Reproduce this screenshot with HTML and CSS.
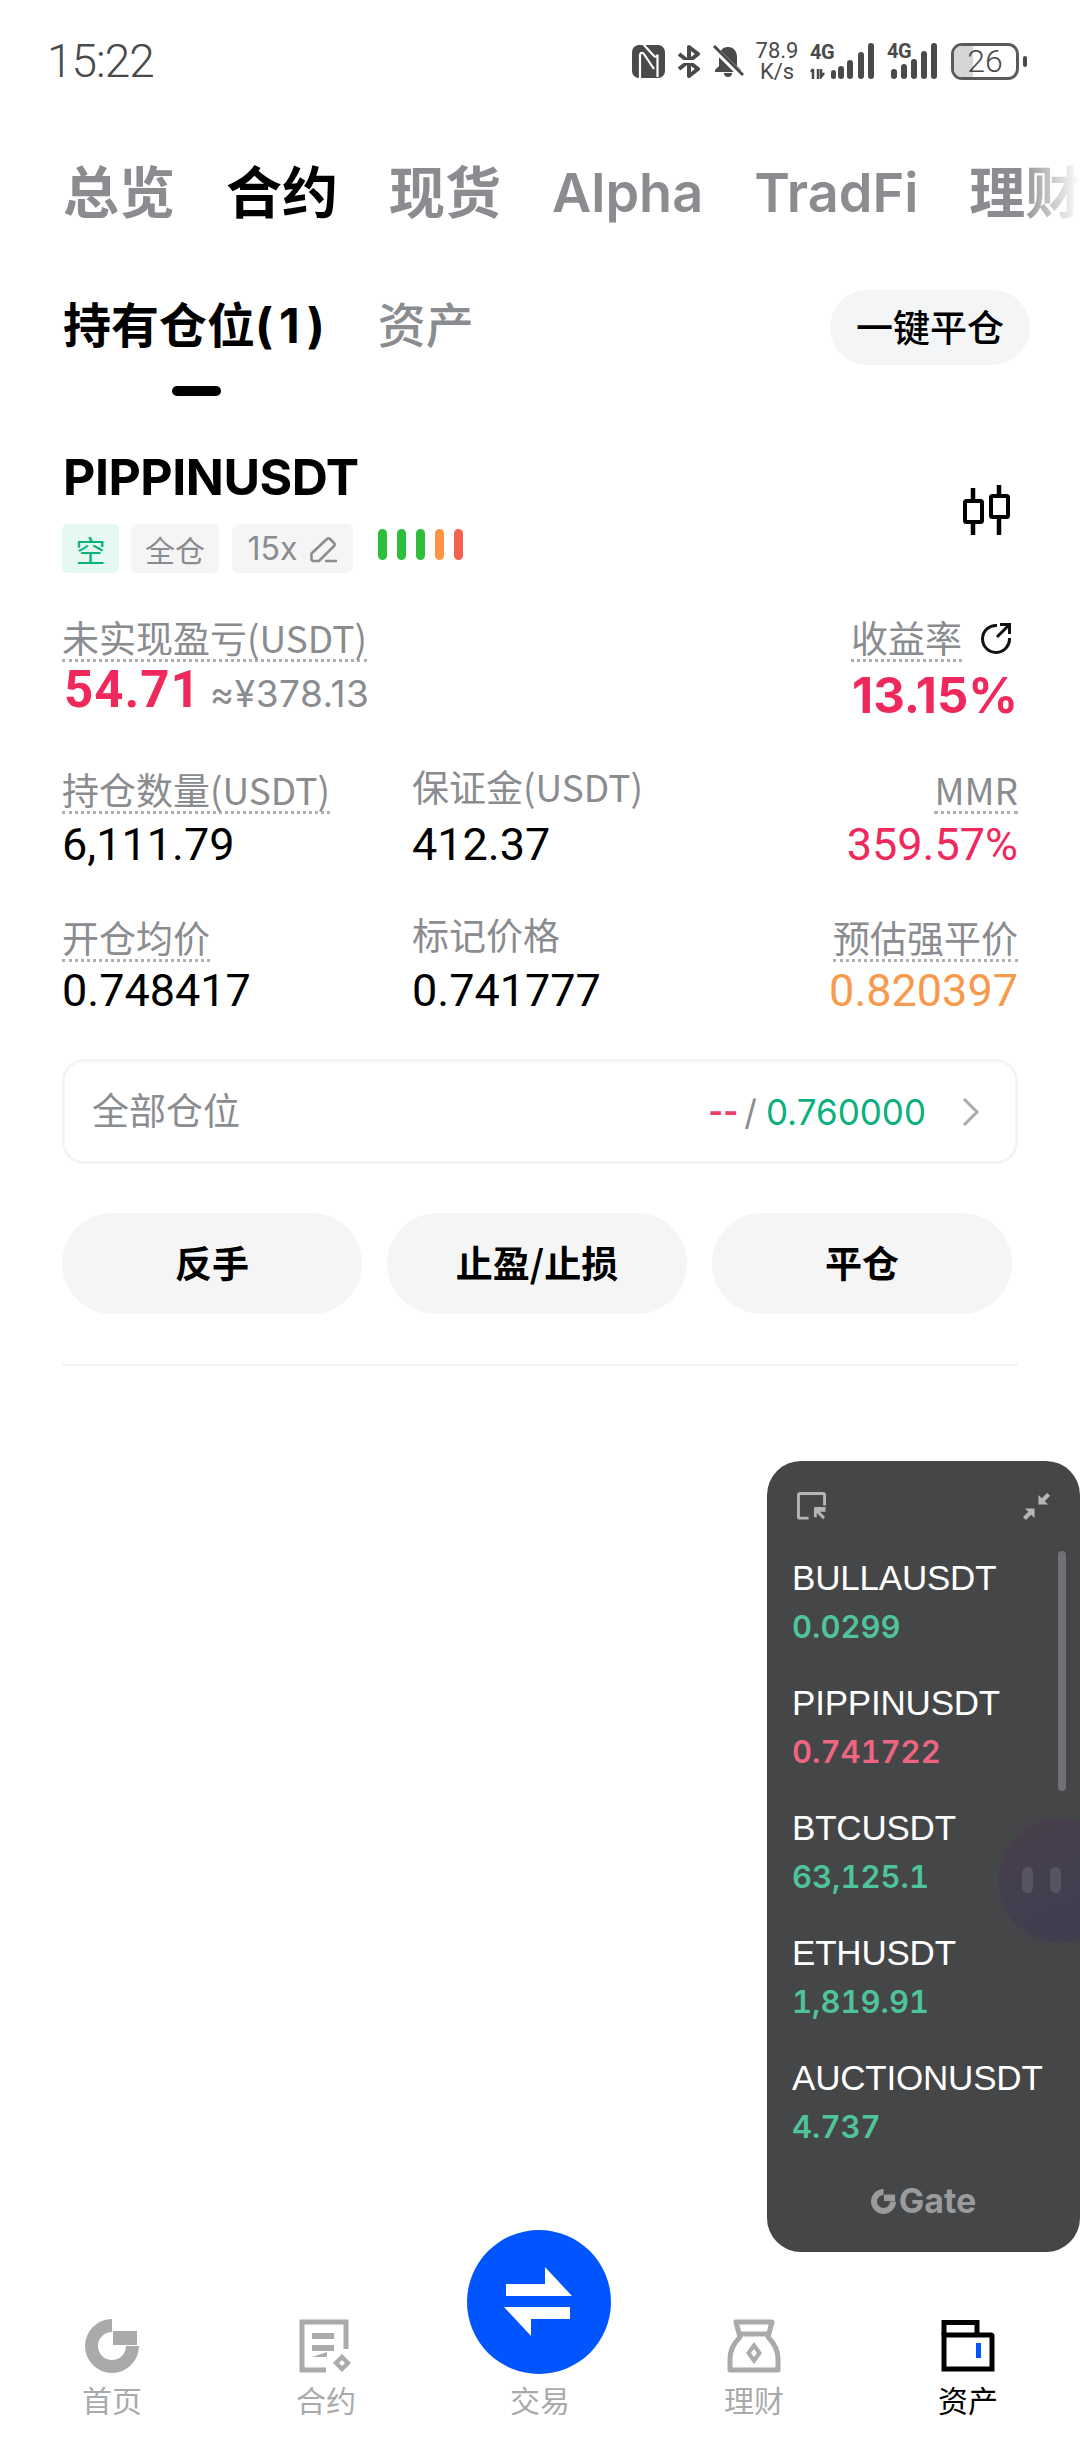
FILE: index.html
```html
<!DOCTYPE html>
<html lang="zh">
<head>
<meta charset="utf-8">
<title>持有仓位</title>
<link rel="stylesheet" href="styles.css">
</head>
<body>
<div class="page">
  <header class="status">
    <span class="clock">15:22</span>
    <div class="sysicons">
      <svg class="ic-nfc" viewBox="0 0 33 33"><rect width="33" height="33" rx="7" fill="#4a4a4a"/><path d="M8 33V10c0-2 2-3 3.500-1.500L22 24" fill="none" stroke="#fff" stroke-width="2.200"/><path d="M11 0l11 12c1.500 1.500 3.500.5 3.500-1.500V33" fill="none" stroke="#fff" stroke-width="2.200" transform="translate(0 -1)"/></svg>
      <svg class="ic-bt" viewBox="0 0 23 33"><path d="M2 9l19 15-9 7V2l9 7L2 24" fill="none" stroke="#4a4a4a" stroke-width="4" stroke-linejoin="round"/><path d="M0 16.500h23" stroke="#fff" stroke-width="3"/></svg>
      <svg class="ic-bell" viewBox="0 0 32 32"><path d="M16 2c6 0 9 5 9 10v9l4 4v2H3v-2l4-4v-9c0-5 3-10 9-10zM12 28h8c0 3-2 4-4 4s-4-1-4-4z" fill="#4a4a4a"/><path d="M2 3l28 28" stroke="#fff" stroke-width="6"/><path d="M2 1l29 29" stroke="#4a4a4a" stroke-width="3"/></svg>
      <div class="speed"><span>78.9</span><span>K/s</span></div>
      <div class="sim sim-one">
        <span class="g4">4G</span>
        <svg class="ic-sig1" viewBox="0 0 64 36"><path d="M3 36V26M8 36V26M3 26l-2 3" fill="none" stroke="#4a4a4a" stroke-width="2.500"/><path d="M11 26v8l3-4" fill="none" stroke="#4a4a4a" stroke-width="2.500"/><rect x="21" y="27" width="5" height="9" rx="2.500" fill="#4a4a4a"/><rect x="28" y="23" width="6" height="13" rx="3" fill="#4a4a4a"/><rect x="37" y="17" width="6" height="19" rx="3" fill="#4a4a4a"/><rect x="48" y="9" width="6" height="27" rx="3" fill="#4a4a4a"/><rect x="58" y="0" width="6" height="36" rx="3" fill="#4a4a4a"/></svg>
      </div>
      <div class="sim sim-two">
        <span class="g4">4G</span>
        <svg class="ic-sig2" viewBox="0 0 46 36"><rect x="0" y="26" width="6" height="10" rx="3" fill="#4a4a4a"/><rect x="10" y="21" width="6" height="15" rx="3" fill="#4a4a4a"/><rect x="20" y="16" width="6" height="20" rx="3" fill="#4a4a4a"/><rect x="30" y="8" width="6" height="28" rx="3" fill="#4a4a4a"/><rect x="40" y="0" width="6" height="36" rx="3" fill="#4a4a4a"/></svg>
      </div>
      <div class="battery"><div class="batt-body"><span class="batt-fill"></span><span class="batt-num">26</span></div><span class="batt-nub"></span></div>
    </div>
  </header>

  <nav class="tabs">
    <span class="cjk">总览</span><span class="cjk on">合约</span><span class="cjk">现货</span><span class="lat">Alpha</span><span class="lat">TradFi</span><span class="cjk">理财</span>
  </nav>

  <section class="subtabs">
    <div class="subtab on"><span class="subtab-text">持有仓位<span class="count">(1)</span></span><i class="subtab-bar"></i></div>
    <div class="subtab"><span class="subtab-text">资产</span></div>
    <button class="closeall">一键平仓</button>
  </section>

  <main class="card">
    <div class="card-head">
      <div>
        <h1 class="symbol">PIPPINUSDT</h1>
        <div class="badges">
          <span class="badge short">空</span>
          <span class="badge cross">全仓</span>
          <span class="badge lev">15x
            <svg class="ic-edit" viewBox="0 0 28 28"><path d="M4 26h6L25 11a2 2 0 0 0 0-3l-4-4a2 2 0 0 0-3 0L3 18a2 2 0 0 0-.500 1.500V24a2 2 0 0 0 1.500 2zM16 26h12" fill="none" stroke="#8a8c8f" stroke-width="2.600"/></svg>
          </span>
          <div class="risk"><i class="g"></i><i class="g"></i><i class="g"></i><i class="o"></i><i class="r"></i></div>
        </div>
      </div>
      <svg class="ic-candle" viewBox="0 0 48 52"><path d="M10 3v13M10 37v13M36 0v11M36 32v18" stroke="#000" stroke-width="4.500" fill="none"/><rect x="2" y="16" width="17" height="21" rx="1.500" fill="none" stroke="#000" stroke-width="4"/><rect x="28" y="11" width="17" height="21" rx="1.500" fill="none" stroke="#000" stroke-width="4"/></svg>
    </div>

    <div class="row row-pnl">
      <div class="stat">
        <span class="label dot">未实现盈亏(USDT)</span>
        <div class="pnl"><span class="pnl-num">54.71</span><span class="pnl-cny">≈¥378.13</span></div>
      </div>
      <div class="stat end">
        <div class="label-wrap"><span class="label dot">收益率</span>
          <svg class="ic-share" viewBox="0 0 32 32"><path d="M17 3.500A13.500 13.500 0 1 0 29.500 16" fill="none" stroke="#111" stroke-width="3"/><path d="M17 15L29 3M20 2.500h9.500V12" fill="none" stroke="#111" stroke-width="3"/></svg>
        </div>
        <span class="roe">13.15%</span>
      </div>
    </div>

    <div class="row row-two">
      <div class="stat"><span class="label dot">持仓数量(USDT)</span><span class="val">6,111.79</span></div>
      <div class="stat"><span class="label">保证金(USDT)</span><span class="val">412.37</span></div>
      <div class="stat end"><span class="label dot">MMR</span><span class="val red">359.57%</span></div>
    </div>

    <div class="row row-three">
      <div class="stat"><span class="label dot">开仓均价</span><span class="val">0.748417</span></div>
      <div class="stat"><span class="label">标记价格</span><span class="val">0.741777</span></div>
      <div class="stat end"><span class="label dot">预估强平价</span><span class="val orange">0.820397</span></div>
    </div>

    <div class="allpos">
      <span class="allpos-title">全部仓位</span>
      <div class="allpos-right"><span class="dash">--</span><span class="slash">/</span><span class="tp">0.760000</span>
        <svg class="ic-chev" viewBox="0 0 18 30"><path d="M2 2l13 13L2 28" fill="none" stroke="#a9abad" stroke-width="3"/></svg>
      </div>
    </div>

    <div class="actions">
      <button class="action">反手</button>
      <button class="action">止盈/止损</button>
      <button class="action">平仓</button>
    </div>
    <hr class="divider">
  </main>

  <nav class="bottom">
    <div class="nav-item">
      <svg class="nav-ic" viewBox="0 0 54 54"><path d="M27 0A27 27 0 1 0 54 27H41A14 14 0 1 1 27 13z" fill="#a9aaac"/><rect x="28" y="12" width="24" height="14" fill="#a9aaac"/></svg>
      <span>首页</span>
    </div>
    <div class="nav-item">
      <svg class="nav-ic" viewBox="0 0 54 54"><path d="M27 51H3V3h44v27" fill="none" stroke="#a9aaac" stroke-width="5"/><path d="M13 14h22v6H13zM13 26h22v6H13zM13 38h15v-5" fill="#a9aaac"/><path d="M43 35l9 9-9 9-9-9z" fill="#a9aaac"/><path d="M43 41l3 3-3 3-3-3z" fill="#fff"/></svg>
      <span>合约</span>
    </div>
    <div class="nav-item nav-trade">
      <div class="trade-btn">
        <svg class="ic-swap" viewBox="0 0 70 72"><path d="M2 18H41V1L68 30H2z" fill="#fff"/><path d="M66 41H0L27 70V53H66z" fill="#fff"/></svg>
      </div>
      <span>交易</span>
    </div>
    <div class="nav-item">
      <svg class="nav-ic" viewBox="0 0 54 54"><path d="M9 3h36l-4 15c6 6 10 13 10 22v11H3V40c0-9 4-16 10-22z" fill="none" stroke="#a9aaac" stroke-width="5" stroke-linejoin="round"/><path d="M13 15h28" stroke="#a9aaac" stroke-width="5"/><path d="M27 23l8 11-8 11-8-11z" fill="#a9aaac"/><path d="M27 30l3 4-3 4-3-4z" fill="#fff"/></svg>
      <span>理财</span>
    </div>
    <div class="nav-item active">
      <svg class="nav-ic" viewBox="0 0 54 54"><path d="M3 16V3.500h33V16" fill="none" stroke="#000" stroke-width="5"/><path d="M3 16h47a1 1 0 0 1 1 1v33H3V16z" fill="none" stroke="#000" stroke-width="5"/><rect x="35" y="24" width="5" height="15" fill="#0055ff"/></svg>
      <span>资产</span>
    </div>
  </nav>

  <aside class="panel">
    <div class="panel-head">
      <svg class="panel-ic" viewBox="0 0 30 30"><path d="M12 27H3a1.500 1.500 0 0 1-1.500-1.500V3A1.500 1.500 0 0 1 3 1.500h24A1.500 1.500 0 0 1 28.500 3v11" fill="none" stroke="#b5b5b5" stroke-width="3"/><path d="M18 17h10v2h-7.500M19 17v9M19 18l9 9" fill="none" stroke="#b5b5b5" stroke-width="3"/></svg>
      <svg class="panel-ic" viewBox="0 0 30 30"><path d="M17 3v10h10l-3.500-3.500L29 4l-3-3-5.500 5.500zM13 27V17H3l3.500 3.500L1 26l3 3 5.500-5.500z" fill="#b5b5b5"/></svg>
    </div>
    <ul class="quotes">
      <li><span class="q-name">BULLAUSDT</span><span class="q-price up">0.0299</span></li>
      <li><span class="q-name">PIPPINUSDT</span><span class="q-price down">0.741722</span></li>
      <li><span class="q-name">BTCUSDT</span><span class="q-price up">63,125.1</span></li>
      <li><span class="q-name">ETHUSDT</span><span class="q-price up">1,819.91</span></li>
      <li><span class="q-name">AUCTIONUSDT</span><span class="q-price up">4.737</span></li>
    </ul>
    <div class="brand">
      <svg class="brand-ic" viewBox="0 0 54 54"><path d="M27 0A27 27 0 1 0 54 27H41A14 14 0 1 1 27 13z" fill="#9a9b9c"/><rect x="28" y="12" width="24" height="14" fill="#9a9b9c"/></svg>
      <span>Gate</span>
    </div>
    <i class="scrollbar"></i>
    <div class="bubble"><i></i><i></i></div>
  </aside>
</div>
</body>
</html>
```

FILE: styles.css
```css
* { box-sizing: border-box; }
html, body { margin: 0; padding: 0; background: #fff; }
body { font-family: "Inter", "Noto Sans CJK SC", sans-serif; color: #000; }
.page { position: relative; width: 1080px; height: 2440px; overflow: hidden; display: flex; flex-direction: column; background: #fff; }

/* status bar */
.status { height: 122px; flex: none; display: flex; align-items: center; justify-content: space-between; padding: 0 53px 0 47px; color: #4a4a4a; }
.clock { font-family: "Roboto", sans-serif; font-weight: 300; font-size: 46px; letter-spacing: -1px; }
.sysicons { display: flex; align-items: center; height: 44px; }
.ic-nfc { width: 33px; height: 33px; margin-right: 12px; }
.ic-bt { width: 23px; height: 33px; margin-right: 12px; }
.ic-bell { width: 32px; height: 32px; margin-right: 11px; }
.speed { display: flex; flex-direction: column; align-items: center; font-family: "Roboto", sans-serif; font-size: 22px; line-height: 21px; width: 44px; margin-right: 11px; }
.sim { position: relative; height: 36px; }
.sim-one { width: 64px; margin-right: 13px; }
.sim-two { width: 50px; margin-right: 14px; }
.g4 { position: absolute; top: 0; left: 0; font-family: "Roboto", sans-serif; font-weight: 700; font-size: 20px; line-height: 18px; letter-spacing: -.5px; }
.sim-two .g4 { top: -1px; }
.ic-sig1 { width: 64px; height: 36px; display: block; }
.ic-sig2 { width: 46px; height: 36px; display: block; margin-left: 4px; }
.battery { display: flex; align-items: center; }
.batt-body { position: relative; width: 68px; height: 37px; border: 3px solid #5a5a5a; border-radius: 11px; display: flex; align-items: center; justify-content: center; overflow: hidden; }
.batt-fill { position: absolute; left: 0; top: 0; bottom: 0; width: 19px; background: #d6d6d6; }
.batt-num { position: relative; font-family: "Roboto", sans-serif; font-weight: 300; font-size: 32px; }
.batt-nub { width: 4px; height: 11px; background: #4a4a4a; border-radius: 2px; margin-left: 4px; }

/* top tabs */
.tabs { position: relative; height: 136px; flex: none; display: flex; align-items: center; gap: 51px; padding: 5px 0 0 63px; white-space: nowrap; overflow: hidden; font-size: 54px; font-weight: 700; color: #8a8c8f; line-height: 80px; }
.tabs .cjk { font-size: 56px; }
.tabs .on { color: #000; }
.tabs .lat { font-weight: 600; }
.tabs::after { content: ""; position: absolute; right: 0; top: 0; bottom: 0; width: 60px; background: linear-gradient(to right, rgba(255,255,255,0), #fff); }

/* sub tabs */
.subtabs { height: 138px; flex: none; display: flex; align-items: flex-start; gap: 47px; padding: 0 50px 0 63px; }
.subtab { display: flex; flex-direction: column; align-items: center; color: #8a8c8f; }
.subtab-text { font-size: 48px; line-height: 48px; margin-top: 44px; font-weight: 500; }
.subtab.on { color: #000; }
.subtab.on .subtab-text { font-weight: 700; }
.count { letter-spacing: 6px; }
.subtab-bar { display: block; width: 49px; height: 10px; border-radius: 5px; background: #000; margin-top: 36px; }
.closeall { margin: 32px 0 0 auto; width: 200px; height: 75px; border: 0; border-radius: 38px; background: #f4f5f6; font: 500 37px/70px "Noto Sans CJK SC", sans-serif; color: #000; padding: 0 0 4px; }

/* position card */
.card { flex: 1; padding: 51px 62px 0; }
.card-head { display: flex; align-items: center; justify-content: space-between; }
.symbol { margin: 0; font-size: 50px; line-height: 60px; font-weight: 700; letter-spacing: -.5px; padding-left: 1px; }
.badges { display: flex; align-items: flex-start; margin-top: 17px; height: 49px; }
.badge { display: flex; align-items: center; justify-content: center; height: 49px; border-radius: 6px; font-size: 30px; background: #f5f5f6; color: #8a8c8f; }
.short { width: 57px; background: #e5f8f1; color: #0bb07f; margin-right: 12px; }
.cross { width: 88px; margin-right: 13px; }
.lev { width: 121px; gap: 12px; font-size: 32px; }
.ic-edit { width: 28px; height: 28px; }
.risk { display: flex; gap: 10px; margin: 5px 0 0 25px; }
.risk i { width: 9px; height: 31px; border-radius: 5px; display: block; }
.risk .g { background: #2dbe3c; }
.risk .o { background: #ff9544; }
.risk .r { background: #f6604e; }
.ic-candle { width: 48px; height: 52px; margin-right: 7px; margin-top: 2px; }

.row { display: grid; grid-template-columns: 350px 1fr auto; align-items: end; }
.row-pnl { grid-template-columns: 1fr auto; align-items: start; margin-top: 47px; height: 98px; }
.row-two { margin-top: 51px; }
.row-three { margin-top: 47px; }
.stat { display: flex; flex-direction: column; align-items: flex-start; }
.stat.end { align-items: flex-end; }
.label { font-family: "Noto Sans CJK SC", "Inter", sans-serif; font-size: 37px; line-height: 34px; color: #8a8c8f; white-space: nowrap; margin-bottom: 11px; }
.label.dot { border-bottom: 3px dotted #aeb0b3; padding-bottom: 5px; margin-bottom: 0; }
.label-wrap { display: flex; align-items: flex-start; gap: 18px; }
.ic-share { width: 32px; height: 32px; margin-top: 2px; margin-right: 6px; }
.pnl { display: flex; align-items: baseline; gap: 9px; line-height: 50px; margin-top: 3px; padding-left: 2px; }
.pnl-num { font-size: 51px; font-weight: 700; color: #f0295c; font-family: "Roboto", sans-serif; letter-spacing: 1px; }
.pnl-cny { font-size: 37px; letter-spacing: .5px; color: #8a8c8f; }
.roe { font-size: 49px; line-height: 50px; font-weight: 700; color: #f0295c; margin-top: 9px; }
.val { font-family: "Roboto", sans-serif; font-size: 45px; line-height: 50px; margin-top: 4px; }
.row-two .val { margin-top: 6px; }
.red { color: #f0295c; }
.orange { color: #f79a4d; }

.allpos { display: flex; align-items: center; justify-content: space-between; height: 105px; margin-top: 43px; border: 3px solid #f3f4f5; border-radius: 22px; padding: 0 35px 0 27px; }
.allpos-title { font-family: "Noto Sans CJK SC", sans-serif; font-size: 37px; line-height: 44px; color: #8a8c8f; padding-bottom: 5px; }
.allpos-right { display: flex; align-items: center; font-size: 35px; }
.dash { color: #ee3f68; font-weight: 700; font-size: 32px; }
.slash { color: #8a8c8f; margin: 0 9px 0 6px; }
.tp { color: #0bb07f; }
.ic-chev { width: 18px; height: 30px; margin-left: 36px; }

.actions { display: flex; gap: 25px; margin-top: 49px; }
.action { width: 300px; height: 101px; border: 0; border-radius: 51px; background: #f5f5f5; font: 700 37px "Noto Sans CJK SC", sans-serif; color: #000; padding: 0 0 4px; }
.divider { border: 0; height: 2px; background: #f4f4f4; margin: 50px 0 0; width: 956px; }

/* bottom nav */
.bottom { flex: none; height: 124px; display: grid; grid-template-columns: repeat(5, 214px); padding-left: 5px; }
.nav-item { display: flex; flex-direction: column; align-items: center; padding-top: 3px; font-family: "Noto Sans CJK SC", sans-serif; font-size: 30px; line-height: 36px; color: #a9aaac; }
.nav-ic { width: 54px; height: 54px; display: block; margin-bottom: 8px; }
.active { color: #000; }
.nav-trade { position: relative; padding-top: 65px; }
.trade-btn { position: absolute; top: -86px; left: 34px; width: 144px; height: 144px; border-radius: 50%; background: #0055ff; display: flex; align-items: center; justify-content: center; }
.ic-swap { width: 70px; height: 72px; }

/* floating panel */
.panel { position: absolute; left: 767px; top: 1461px; width: 313px; height: 791px; background: #444648; border-radius: 34px; overflow: hidden; padding: 31px 0 0 25px; color: #fff; }
.panel-head { display: flex; justify-content: space-between; padding: 0 29px 0 5px; }
.panel-ic { width: 29px; height: 29px; display: block; }
.quotes { list-style: none; margin: 37px 0 0; padding: 0; }
.quotes li { display: flex; flex-direction: column; height: 125px; }
.q-name { font-family: "Liberation Sans", sans-serif; font-size: 35px; line-height: 40px; letter-spacing: -.2px; }
.q-price { font-weight: 600; font-size: 31px; line-height: 36px; margin-top: 11px; font-variant-numeric: tabular-nums; }
.up { color: #4fc49a; }
.down { color: #ee6580; }
.brand { display: flex; align-items: center; justify-content: center; gap: 3px; margin-left: -25px; width: 313px; color: #9a9b9c; font-weight: 700; font-size: 34px; line-height: 30px; position: relative; top: 3px; }
.brand-ic { width: 25px; height: 25px; }
.scrollbar { position: absolute; left: 291px; top: 90px; width: 8px; height: 240px; border-radius: 4px; background: #6f7174; }
.bubble { position: absolute; left: 231px; top: 357px; width: 125px; height: 125px; border-radius: 50%; background: linear-gradient(160deg, #4a3e4b, #3f3f50 70%); display: flex; gap: 17px; padding: 49px 0 0 24px; }
.bubble i { display: block; width: 11px; height: 26px; border-radius: 6px; background: #56555f; }
```
